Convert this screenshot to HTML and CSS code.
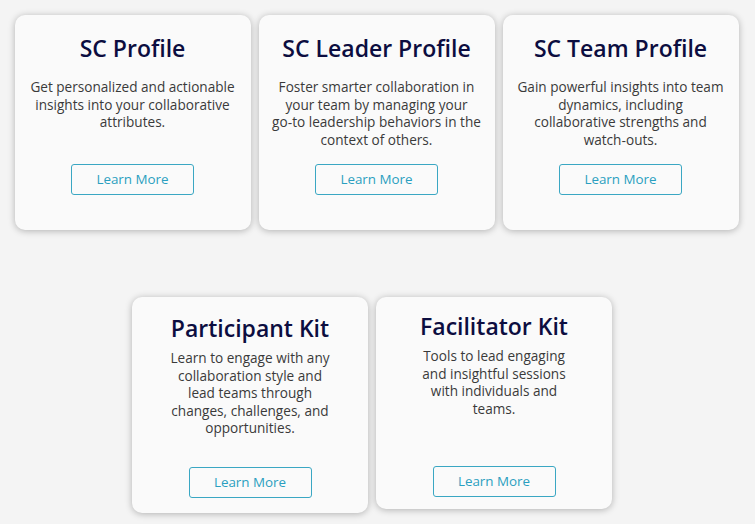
FILE: index.html
```html
<!DOCTYPE html>
<html lang="en">
<head>
<meta charset="utf-8"/>
<title>SC Profiles and Kits</title>
<link rel="stylesheet" href="styles.css">
</head>
<body>
<div class="row row-top">
  <div class="card">
    <h2>SC Profile</h2>
    <p>Get personalized and actionable insights into your collaborative attributes.</p>
    <a class="btn" href="#">Learn More</a>
  </div>
  <div class="card">
    <h2>SC Leader Profile</h2>
    <p>Foster smarter collaboration in your team by managing your go&#8209;to leadership behaviors in the context of others.</p>
    <a class="btn" href="#">Learn More</a>
  </div>
  <div class="card">
    <h2>SC Team Profile</h2>
    <p class="tight">Gain powerful insights into team dynamics, including collaborative strengths and watch&#8209;outs.</p>
    <a class="btn" href="#">Learn More</a>
  </div>
</div>

<div class="row row-bottom">
  <div class="card kit">
    <h2>Participant Kit</h2>
    <p class="narrow">Learn to engage with any collaboration style and lead teams through changes, challenges, and opportunities.</p>
    <a class="btn" href="#">Learn More</a>
  </div>
  <div class="card kit kit-short">
    <h2>Facilitator Kit</h2>
    <p class="narrow">Tools to lead engaging and insightful sessions with individuals and teams.</p>
    <a class="btn" href="#">Learn More</a>
  </div>
</div>
</body>
</html>
```

FILE: styles.css
```css
body {
  margin: 0;
  padding: 15px 0;
  background: #f4f4f4;
  font-family: "Open Sans", sans-serif;
}
.row {
  display: flex;
  justify-content: center;
  align-items: flex-start;
  gap: 8px;
}
.row-top {
  padding-right: 2px;
}
.row-bottom {
  margin-top: 67px;
  padding-right: 11px;
}
.card {
  width: 236px;
  height: 215px;
  box-sizing: border-box;
  padding: 19px 13px 0;
  background: #fafafa;
  border-radius: 10px;
  box-shadow: 0 1px 7px rgba(0, 0, 0, 0.28);
  display: flex;
  flex-direction: column;
  align-items: center;
  text-align: center;
}
.card h2 {
  margin: 0;
  font-size: 23px;
  line-height: 29px;
  font-weight: 600;
  color: #0c0d40;
}
.card p {
  margin: 15px 0 16px;
  min-height: 70px;
  font-size: 13.6px;
  line-height: 17.6px;
  color: #3a3a3a;
}
.card .tight {
  padding: 0 1.5px;
}
.card.kit {
  height: auto;
  min-height: 212px;
  padding: 17px 13px 15px;
}
.card.kit-short {
  padding-top: 15px;
  padding-bottom: 12px;
}
.card.kit p {
  margin: 6px 0 30px;
}
.card .narrow {
  padding: 0 24px;
}
.btn {
  display: block;
  width: 123px;
  height: 31px;
  box-sizing: border-box;
  border: 1px solid #3aa7c3;
  border-radius: 3px;
  color: #2a9fc0;
  font-size: 13.4px;
  line-height: 29px;
  text-decoration: none;
}
.card.kit .btn {
  margin-top: auto;
}
```
